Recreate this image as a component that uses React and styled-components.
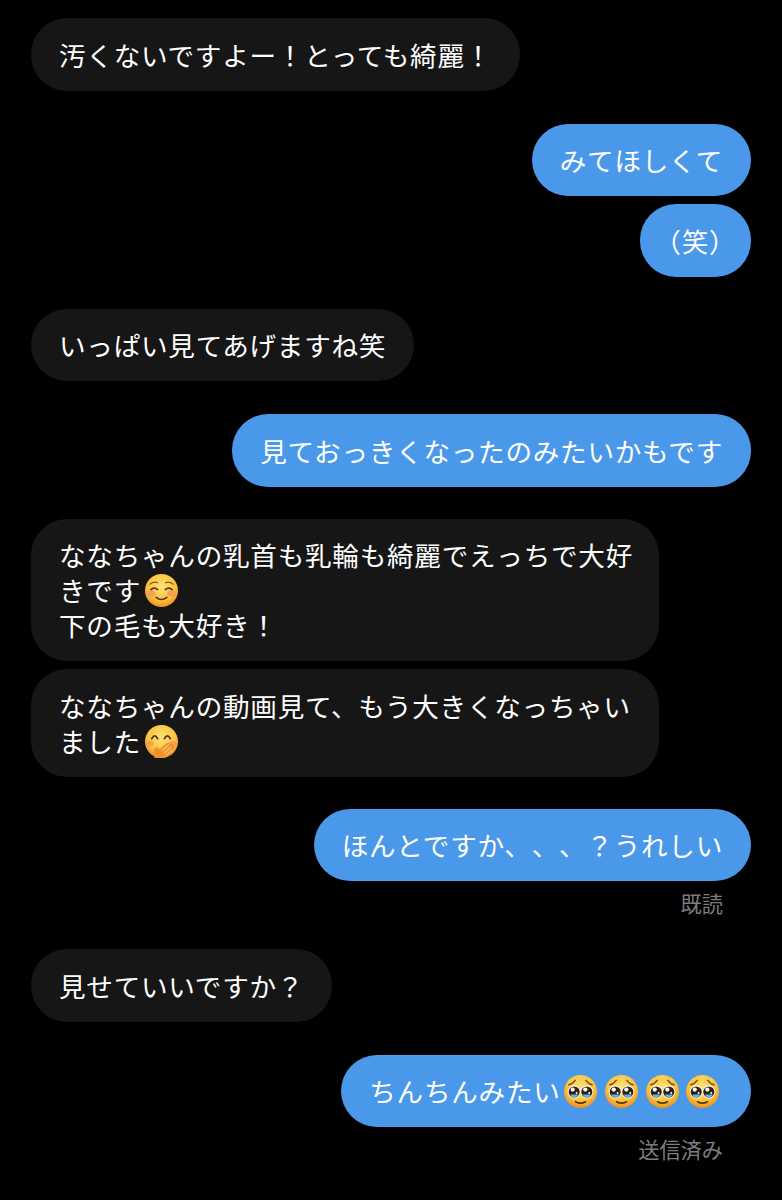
import React from "react";
import styled, { createGlobalStyle } from "styled-components";

const Global = createGlobalStyle`
  html, body { margin: 0; padding: 0; background: #000; }
  body { font-family: "Noto Sans CJK JP", "Noto Sans", sans-serif; }
`;

const Thread = styled.div`
  width: 782px;
  height: 1200px;
  box-sizing: border-box;
  padding: 18px 31px 0 31px;
  display: flex;
  flex-direction: column;
  overflow: hidden;
  background: #000;
`;

const Bubble = styled.div`
  box-sizing: border-box;
  width: ${(p) => (p.$wide ? "628px" : "fit-content")};
  align-self: ${(p) => (p.$me ? "flex-end" : "flex-start")};
  margin-top: ${(p) => p.$top || 0}px;
  padding: 18.5px 28px 19px;
  border-radius: 36px;
  background: ${(p) => (p.$me ? "#4a98ea" : "#161616")};
  color: #fff;
  font-size: 26.6px;
  line-height: 35px;
  letter-spacing: 0.74px;
  white-space: pre;
  text-spacing-trim: space-all;
  font-feature-settings: ${(p) => (p.$halt ? '"halt"' : "normal")};
`;

const Status = styled.div`
  align-self: flex-end;
  margin: 8px 28px 0 0;
  color: #7c7c7e;
  font-size: 21.2px;
  line-height: 28px;
`;

// negative block margins keep the emoji from stretching its line
const Emoji = styled.svg`
  width: 35px;
  height: 35px;
  vertical-align: 5px;
  margin: -12px 2.8px;
`;

const Face = ({ id }) => (
  <>
    <defs>
      <radialGradient id={id} cx="50%" cy="38%" r="62%">
        <stop offset="0%" stopColor="#ffe27a" />
        <stop offset="65%" stopColor="#fbc53f" />
        <stop offset="100%" stopColor="#ec8f22" />
      </radialGradient>
    </defs>
    <circle cx="18" cy="18" r="17" fill={`url(#${id})`} />
  </>
);

const Smile = () => (
  <Emoji viewBox="0 0 36 36">
    <Face id="smileFace" />
    <ellipse cx="7.500" cy="21" rx="4.500" ry="3.200" fill="#f2935f" opacity="0.75" />
    <ellipse cx="28.500" cy="21" rx="4.500" ry="3.200" fill="#f2935f" opacity="0.75" />
    <path d="M6 11.500q4-3 8-1.500M22 10q4-1.500 8 1.500" stroke="#8a5a20" strokeWidth="1.300" fill="none" strokeLinecap="round" />
    <path d="M7 17q3.500-3 7 0M22 17q3.500-3 7 0" stroke="#5a3412" strokeWidth="1.700" fill="none" strokeLinecap="round" />
    <path d="M12.500 25q5.500 4.500 11 0" stroke="#5a3412" strokeWidth="1.700" fill="none" strokeLinecap="round" />
  </Emoji>
);

const HandOverMouth = () => (
  <Emoji viewBox="0 0 36 36">
    <Face id="handFace" />
    <ellipse cx="6.500" cy="20" rx="3.500" ry="2.600" fill="#f2935f" opacity="0.7" />
    <ellipse cx="29.500" cy="20" rx="3.500" ry="2.600" fill="#f2935f" opacity="0.7" />
    <path d="M8 15q3-5.500 6 0M21 15q3-5.500 6 0" stroke="#5a3412" strokeWidth="1.900" fill="none" strokeLinecap="round" />
    <path d="M11 35q-2-6 0-10q2-2 3.500 0l1.500 1l7-6q2-1.500 3 0q2-1 3 .5q1.500 0 1.500 2q1.500 .5 .5 2.500l-5 6q-3 4-7 4z" fill="#f0922e" />
    <path d="M19 27l6.500-5.500M21 29.500l6.500-5.500M23 32l5.500-5" stroke="#fcc86a" strokeWidth="1.200" fill="none" strokeLinecap="round" />
  </Emoji>
);

const Pleading = ({ id }) => (
  <Emoji viewBox="0 0 36 36">
    <Face id={id} />
    <path d="M6 11q3.500-.5 6.500-4.500M23.500 6.500q3 4 6.500 4.500" stroke="#7a4a14" strokeWidth="1.500" fill="none" strokeLinecap="round" />
    <circle cx="11.500" cy="18.500" r="6.600" fill="#fff" />
    <circle cx="24.500" cy="18.500" r="6.600" fill="#fff" />
    <circle cx="11.500" cy="18.500" r="5.700" fill="#33210f" />
    <circle cx="24.500" cy="18.500" r="5.700" fill="#33210f" />
    <path d="M7 21a5 5 0 0 0 9 0z" fill="#5fb6ea" />
    <path d="M20 21a5 5 0 0 0 9 0z" fill="#5fb6ea" />
    <circle cx="10" cy="16" r="2.200" fill="#fff" />
    <circle cx="23" cy="16" r="2.200" fill="#fff" />
    <circle cx="14" cy="19.500" r="1" fill="#fff" />
    <circle cx="27" cy="19.500" r="1" fill="#fff" />
    <path d="M13 28.500q5 3 10 0" stroke="#5a3412" strokeWidth="1.800" fill="none" strokeLinecap="round" />
  </Emoji>
);

export default function App() {
  return (
    <Thread>
      <Global />
      <Bubble>汚くないですよー！とっても綺麗！</Bubble>
      <Bubble $me $top={33}>みてほしくて</Bubble>
      <Bubble $me $halt $top={8}>（笑）</Bubble>
      <Bubble $top={32}>いっぱい見てあげますね笑</Bubble>
      <Bubble $me $top={33}>見ておっきくなったのみたいかもです</Bubble>
      <Bubble $wide $top={32}>
        ななちゃんの乳首も乳輪も綺麗でえっちで大好{"\n"}きです<Smile />{"\n"}下の毛も大好き！
      </Bubble>
      <Bubble $wide $top={8}>
        ななちゃんの動画見て、もう大きくなっちゃい{"\n"}ました<HandOverMouth />
      </Bubble>
      <Bubble $me $top={32}>ほんとですか、、、？うれしい</Bubble>
      <Status>既読</Status>
      <Bubble $top={32}>見せていいですか？</Bubble>
      <Bubble $me $top={33}>
        ちんちんみたい<Pleading id="plead1" /><Pleading id="plead2" /><Pleading id="plead3" /><Pleading id="plead4" />
      </Bubble>
      <Status>送信済み</Status>
    </Thread>
  );
}
